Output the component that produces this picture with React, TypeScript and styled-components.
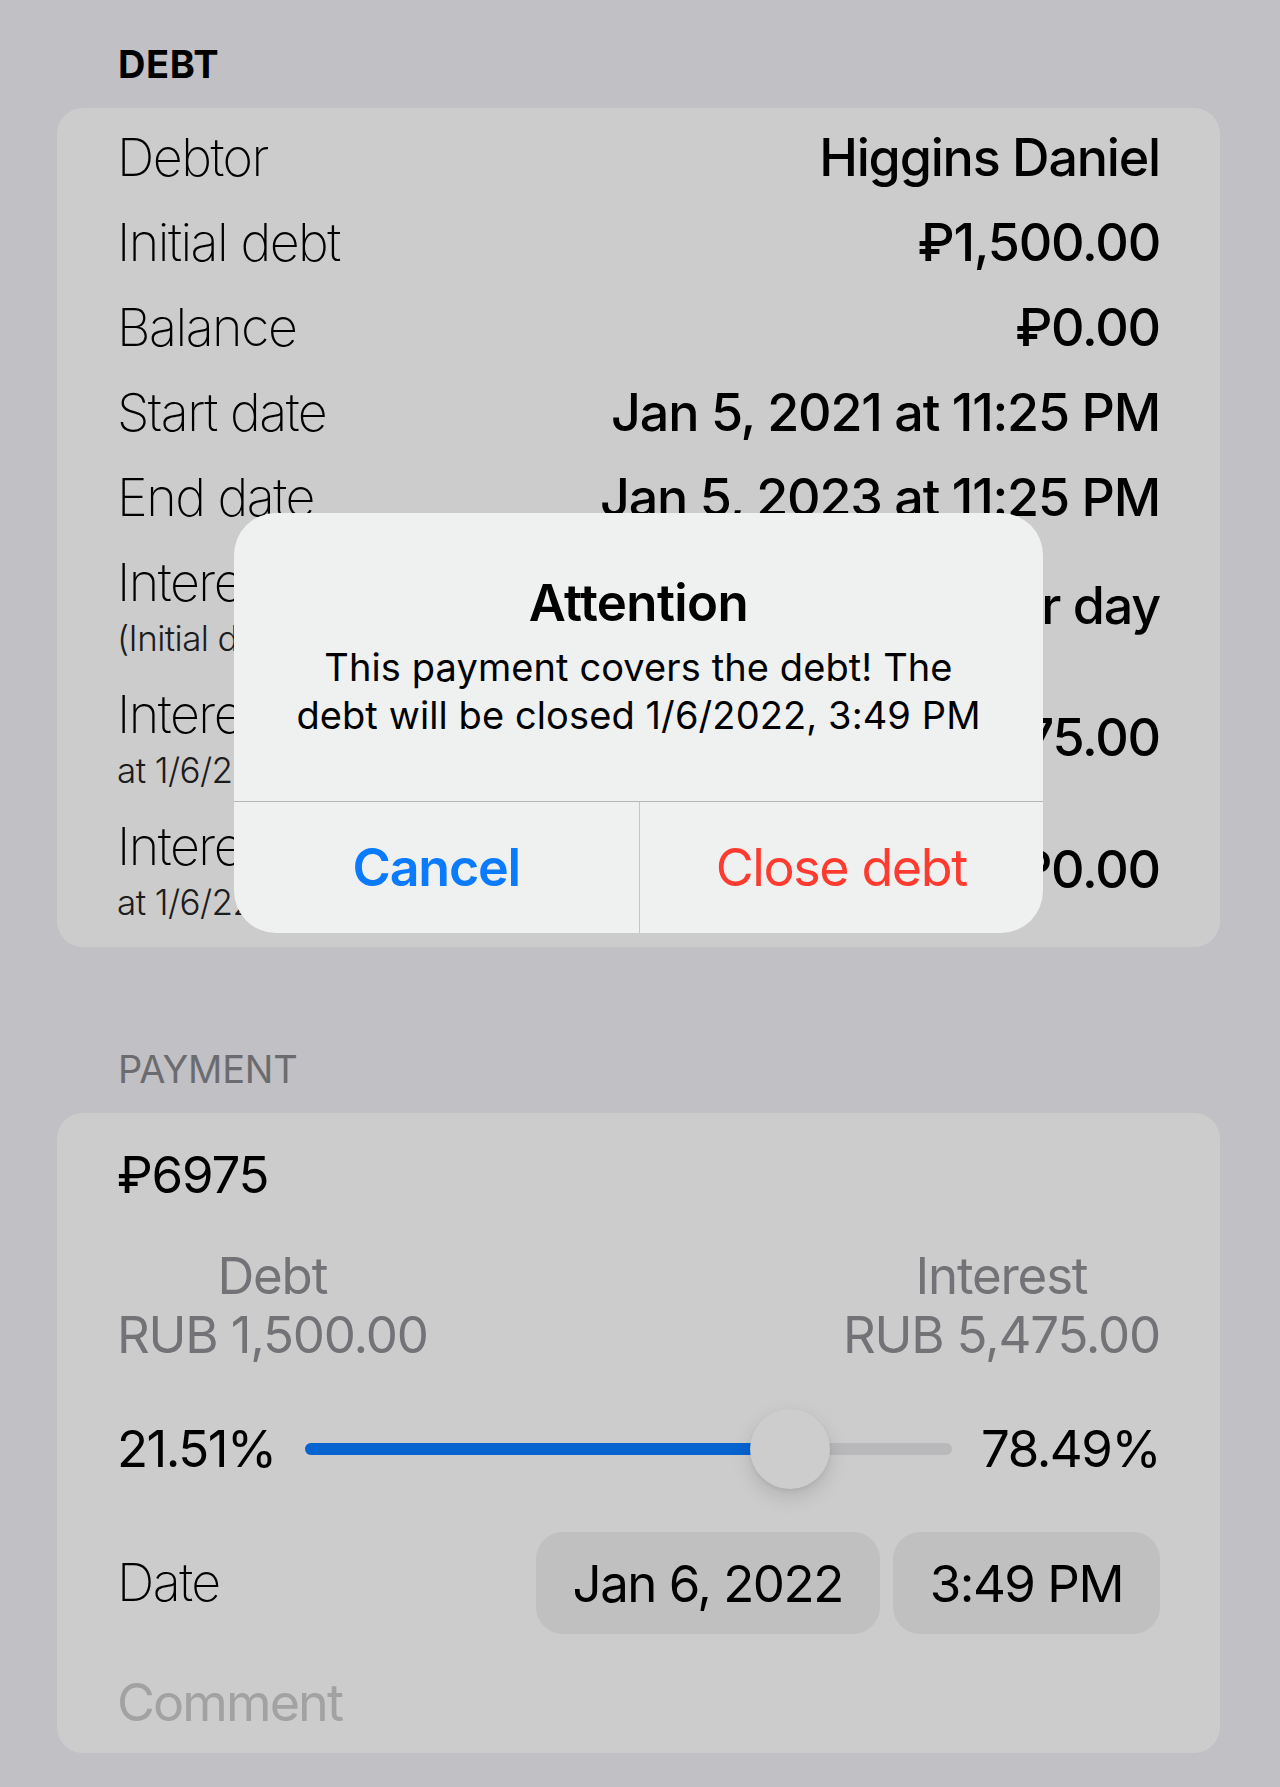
import React from "react";
import styled, { createGlobalStyle } from "styled-components";

const GlobalStyle = createGlobalStyle`
  html, body { margin: 0; padding: 0; background: #c1c0c5; }
  body {
    font-family: Inter, "Noto Sans", "DejaVu Sans", sans-serif;
    -webkit-font-smoothing: antialiased;
    color: #000;
  }
`;

const Page = styled.div`
  position: relative;
  width: 1280px;
  min-height: 1787px;
  box-sizing: border-box;
  padding: 45px 60px 0 57px;
  background: #c1c0c5;
  display: flex;
  flex-direction: column;
`;

const SectionHeader = styled.div<{ $strong?: boolean; $top?: number }>`
  padding-left: 61px;
  margin-top: ${(p) => p.$top ?? 0}px;
  margin-bottom: 25px;
  font-size: 38px;
  line-height: 38px;
  font-weight: ${(p) => (p.$strong ? 700 : 400)};
  color: ${(p) => (p.$strong ? "#000" : "#6c6c70")};
  letter-spacing: ${(p) => (p.$strong ? "0.6px" : "-0.2px")};
`;

const Card = styled.div<{ $pt: number; $pb: number }>`
  background: #cccccc;
  border-radius: 26px;
  padding: ${(p) => p.$pt}px 60px ${(p) => p.$pb}px 60px;
  display: flex;
  flex-direction: column;
`;

const Row = styled.div<{ $h: number }>`
  height: ${(p) => p.$h}px;
  display: flex;
  align-items: center;
  justify-content: space-between;
`;

const LabelStack = styled.div`
  display: flex;
  flex-direction: column;
  gap: 12px;
`;

const Label = styled.div`
  font-size: 52px;
  line-height: 52px;
  font-weight: 200;
  letter-spacing: -1.5px;
  white-space: nowrap;
`;

const SubLabel = styled.div`
  font-size: 35px;
  line-height: 35px;
  font-weight: 300;
  letter-spacing: -0.6px;
  color: #1c1c1e;
  white-space: nowrap;
`;

const Value = styled.div`
  font-size: 52px;
  line-height: 52px;
  font-weight: 500;
  letter-spacing: -1.2px;
  text-align: right;
  white-space: nowrap;
`;

const Amount = styled.div`
  font-size: 51px;
  line-height: 50px;
  font-weight: 400;
  letter-spacing: -1.2px;
`;

const Split = styled.div`
  margin-top: 46px;
  display: flex;
  justify-content: space-between;
`;

const SplitColumn = styled.div`
  display: flex;
  flex-direction: column;
  align-items: center;
  font-size: 51px;
  line-height: 59px;
  font-weight: 400;
  letter-spacing: -1.2px;
  color: #737377;
`;

const SliderRow = styled.div`
  margin-top: 45px;
  height: 80px;
  display: flex;
  align-items: center;
  gap: 29px;
`;

const Percent = styled.div`
  font-size: 51px;
  line-height: 50px;
  font-weight: 400;
  letter-spacing: -1.5px;
  white-space: nowrap;
`;

const Slider = styled.div`
  position: relative;
  flex: 1;
  height: 80px;
  display: flex;
  align-items: center;
`;

const Track = styled.div`
  width: 100%;
  height: 12px;
  border-radius: 6px;
  background: #b9b9bb;
  overflow: hidden;
  display: flex;
`;

const Fill = styled.div`
  height: 100%;
  background: #0564cf;
`;

const Thumb = styled.div`
  position: absolute;
  top: 0;
  width: 80px;
  height: 80px;
  border-radius: 50%;
  background: #cdcdcd;
  box-shadow: 0 8px 20px rgba(0, 0, 0, 0.13), 0 2px 4px rgba(0, 0, 0, 0.06);
`;

const DateRow = styled.div`
  margin-top: 43px;
  height: 102px;
  display: flex;
  align-items: center;
  justify-content: space-between;
`;

const PickerGroup = styled.div`
  display: flex;
  gap: 13px;
`;

const PickerButton = styled.div`
  height: 102px;
  box-sizing: border-box;
  padding: 0 37px;
  border-radius: 27px;
  background: #c0c0c0;
  display: flex;
  align-items: center;
  font-size: 51px;
  font-weight: 400;
  letter-spacing: -1.5px;
  white-space: nowrap;
`;

const Comment = styled.div`
  margin-top: 43px;
  font-size: 52px;
  line-height: 52px;
  font-weight: 400;
  letter-spacing: -1.9px;
  color: #a2a2a2;
`;

const Dialog = styled.div`
  position: absolute;
  left: 234px;
  top: 513px;
  width: 809px;
  border-radius: 42px;
  background: #eff0f0;
  overflow: hidden;
  display: flex;
  flex-direction: column;
`;

const DialogBody = styled.div`
  padding: 64px 30px 62px;
  display: flex;
  flex-direction: column;
  align-items: center;
  text-align: center;
`;

const DialogTitle = styled.div`
  font-size: 51px;
  line-height: 51px;
  font-weight: 600;
  letter-spacing: -0.6px;
`;

const DialogMessage = styled.div`
  margin-top: 15px;
  font-size: 38px;
  line-height: 48px;
  font-weight: 400;
  letter-spacing: 0.1px;
  white-space: nowrap;
`;

const DialogActions = styled.div`
  border-top: 1px solid #b5b5b7;
  display: grid;
  grid-template-columns: 1fr 1fr;
  height: 131px;
`;

const DialogAction = styled.div<{ $color: string; $bold?: boolean; $divider?: boolean }>`
  display: flex;
  align-items: center;
  justify-content: center;
  font-size: 52px;
  font-weight: ${(p) => (p.$bold ? 600 : 400)};
  letter-spacing: ${(p) => (p.$bold ? "-1.2px" : "-1.4px")};
  color: ${(p) => p.$color};
  border-left: ${(p) => (p.$divider ? "1px solid #c6c6c8" : "none")};
`;

type Item = { label: string; sub?: string; value: string };

const debtItems: Item[] = [
  { label: "Debtor", value: "Higgins Daniel" },
  { label: "Initial debt", value: "₽1,500.00" },
  { label: "Balance", value: "₽0.00" },
  { label: "Start date", value: "Jan 5, 2021 at 11:25 PM" },
  { label: "End date", value: "Jan 5, 2023 at 11:25 PM" },
  { label: "Interest rate", sub: "(Initial debt)", value: "1% per day" },
  { label: "Interest", sub: "at 1/6/2022", value: "₽5,475.00" },
  { label: "Interest paid", sub: "at 1/6/22", value: "₽0.00" },
];

const ratio = 0.7849;

export default function App() {
  return (
    <>
      <GlobalStyle />
      <Page>
        <SectionHeader $strong>DEBT</SectionHeader>
        <Card $pt={7} $pb={11}>
          {debtItems.map((it) => (
            <Row key={it.label} $h={it.sub ? 132 : 85}>
              {it.sub ? (
                <LabelStack>
                  <Label>{it.label}</Label>
                  <SubLabel>{it.sub}</SubLabel>
                </LabelStack>
              ) : (
                <Label>{it.label}</Label>
              )}
              <Value>{it.value}</Value>
            </Row>
          ))}
        </Card>

        <SectionHeader $top={103}>PAYMENT</SectionHeader>
        <Card $pt={37} $pb={24}>
          <Amount>₽6975</Amount>
          <Split>
            <SplitColumn>
              <span>Debt</span>
              <span>RUB 1,500.00</span>
            </SplitColumn>
            <SplitColumn>
              <span>Interest</span>
              <span>RUB 5,475.00</span>
            </SplitColumn>
          </Split>
          <SliderRow>
            <Percent>21.51%</Percent>
            <Slider>
              <Track>
                <Fill style={{ width: `calc(40px + (100% - 80px) * ${ratio})` }} />
              </Track>
              <Thumb style={{ left: `calc((100% - 80px) * ${ratio})` }} />
            </Slider>
            <Percent>78.49%</Percent>
          </SliderRow>
          <DateRow>
            <Label>Date</Label>
            <PickerGroup>
              <PickerButton>Jan 6, 2022</PickerButton>
              <PickerButton>3:49 PM</PickerButton>
            </PickerGroup>
          </DateRow>
          <Comment>Comment</Comment>
        </Card>

        <Dialog>
          <DialogBody>
            <DialogTitle>Attention</DialogTitle>
            <DialogMessage>
              This payment covers the debt! The
              <br />
              debt will be closed 1/6/2022, 3:49 PM
            </DialogMessage>
          </DialogBody>
          <DialogActions>
            <DialogAction $color="#0a7aff" $bold>
              Cancel
            </DialogAction>
            <DialogAction $color="#ff3b30" $divider>
              Close debt
            </DialogAction>
          </DialogActions>
        </Dialog>
      </Page>
    </>
  );
}
